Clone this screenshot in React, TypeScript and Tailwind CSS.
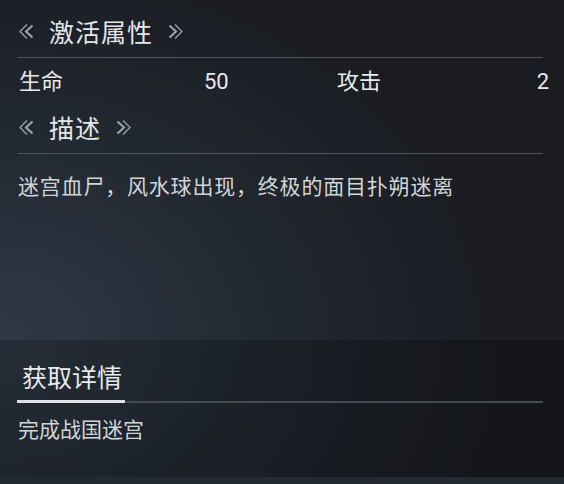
import React from "react";

function Chevrons({ dir }: { dir: "left" | "right" }) {
  const flip = dir === "right" ? "scale(-1,1) translate(-16,0)" : undefined;
  return (
    <svg width="16" height="17" viewBox="0 0 16 17" className="shrink-0">
      <g transform={flip} fill="none" stroke="#9ba1a8" strokeLinejoin="miter">
        <polyline points="9,1.5 2,8.5 9,15.5" strokeWidth="1.3" />
        <polyline points="14.5,2.5 8,8.5 14.5,14.5" strokeWidth="2.2" />
      </g>
    </svg>
  );
}

function SectionTitle({ title }: { title: string }) {
  return (
    <div className="border-b border-[#50555c]">
      <div className="flex items-center h-[47px] pb-[4px] gap-[15px]">
        <Chevrons dir="left" />
        <span className="text-[25px] leading-none text-[#e4e6e8] tracking-[1px]">{title}</span>
        <Chevrons dir="right" />
      </div>
    </div>
  );
}

export default function App() {
  return (
    <div
      className="w-[564px] h-[484px] overflow-hidden flex flex-col bg-[radial-gradient(ellipse_90%_80%_at_0%_70%,#2f3946_0%,#222831_55%,#1a1c21_100%)]"
      style={{ fontFamily: '"Noto Sans CJK SC", "Noto Sans", sans-serif' }}
    >
      {/* 属性 + 描述 */}
      <div className="pl-[18px] pr-[21px] pt-[10px] flex-1">
        <SectionTitle title="激活属性" />
        <div className="flex items-baseline h-[48px] pt-[10px] text-[22px] text-[#e8eaec] leading-none -mr-[6px]">
          <span className="w-[186px] pl-px">生命</span>
          <span className="w-[133px]" style={{ fontFamily: "Roboto, sans-serif" }}>50</span>
          <span className="flex-1">攻击</span>
          <span style={{ fontFamily: "Roboto, sans-serif" }}>2</span>
        </div>
        <SectionTitle title="描述" />
        <p className="mt-[21px] text-[21px] leading-none text-[#d2d5d8] tracking-[0.8px]">
          迷宫血尸，风水球出现，终极的面目扑朔迷离
        </p>
      </div>

      {/* 获取详情 */}
      <div className="h-[137px] bg-black/20 pl-[17px] pr-[21px] pt-[24px]">
        <div className="relative h-[39px] border-b-2 border-[#454a51]">
          <span className="pl-[5px] text-[25px] leading-none text-[#e8eaec]">获取详情</span>
          <div className="absolute left-0 -bottom-[2px] w-[108px] h-[3px] bg-[#dfe2e5]" />
        </div>
        <p className="mt-[15px] pl-px text-[21px] leading-none text-[#d2d5d8]">完成战国迷宫</p>
      </div>
      <div className="h-[7px] bg-[#242a32]" />
    </div>
  );
}
